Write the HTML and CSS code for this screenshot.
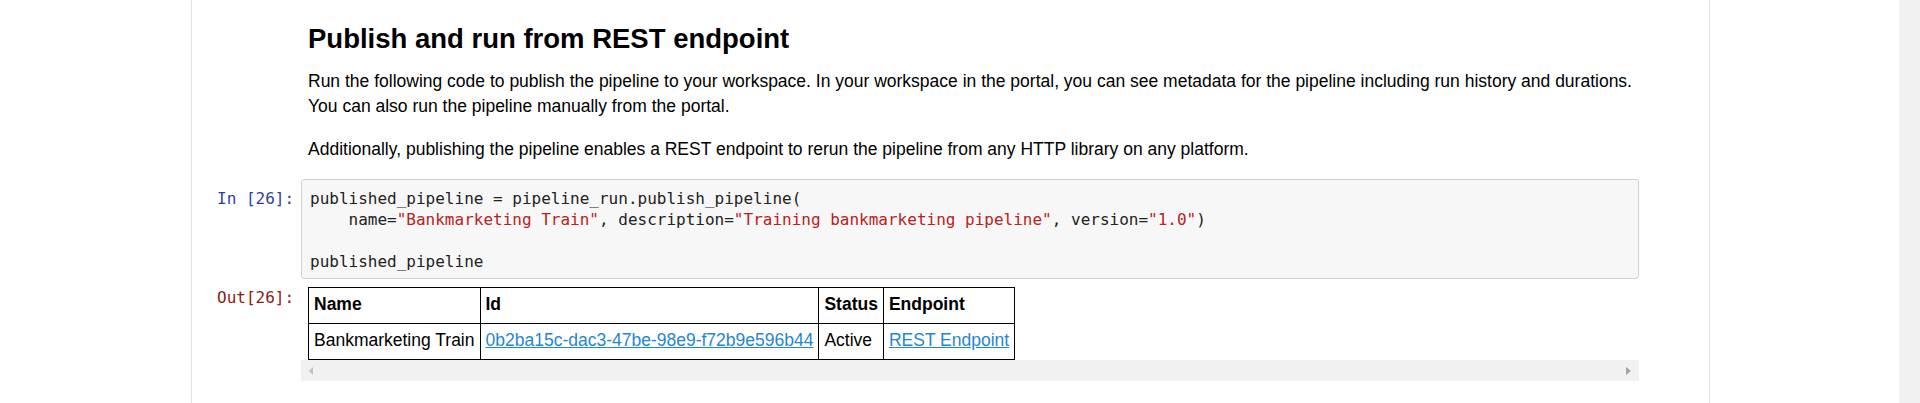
FILE: index.html
```html
<!DOCTYPE html>
<html lang="en">
<head>
<meta charset="utf-8">
<title>Publish and run from REST endpoint</title>
<link rel="stylesheet" href="styles.css">
</head>
<body>
<div class="page">
  <main class="viewport">
    <div class="notebook">
      <div class="cell text-cell">
        <div class="prompt"></div>
        <div class="md">
          <h2>Publish and run from REST endpoint</h2>
          <p>Run the following code to publish the pipeline to your workspace. In your workspace in the portal, you can see metadata for the pipeline including run history and durations.<br>You can also run the pipeline manually from the portal.</p>
          <p>Additionally, publishing the pipeline enables a REST endpoint to rerun the pipeline from any HTTP library on any platform.</p>
        </div>
      </div>
      <div class="cell code-cell">
        <div class="row">
          <div class="prompt in">In&nbsp;[26]:</div>
          <div class="input-area"><pre class="code">published_pipeline = pipeline_run.publish_pipeline(
    name=<span class="str">"Bankmarketing Train"</span>, description=<span class="str">"Training bankmarketing pipeline"</span>, version=<span class="str">"1.0"</span>)

published_pipeline</pre></div>
        </div>
        <div class="row">
          <div class="prompt out">Out[26]:</div>
          <div class="output-sub">
            <div class="table-wrap">
              <table class="result">
                <tr><th>Name</th><th>Id</th><th>Status</th><th>Endpoint</th></tr>
                <tr><td>Bankmarketing Train</td><td><a href="#">0b2ba15c-dac3-47be-98e9-f72b9e596b44</a></td><td>Active</td><td><a href="#">REST Endpoint</a></td></tr>
              </table>
            </div>
            <div class="hscroll"><span class="arrow left"></span><span class="arrow right"></span></div>
          </div>
        </div>
      </div>
    </div>
  </main>
  <div class="vscroll"></div>
</div>
</body>
</html>
```
FILE: styles.css
```css
* { box-sizing: border-box; }
html, body { margin: 0; padding: 0; background: #fff; }
body {
  font-family: "Liberation Sans", Arial, sans-serif;
  font-size: 17.5px;
  line-height: 25px;
  color: #000;
}
.page {
  display: flex;
  height: 403px;
  overflow: hidden;
}
.viewport {
  flex: 1;
  min-width: 0;
}
.vscroll {
  width: 21px;
  background: #f1f1f1;
}
.notebook {
  margin-left: 191px;
  width: 1519px;
  height: 403px;
  border-left: 1px solid #e2e2e2;
  border-right: 1px solid #e2e2e2;
  padding: 22px 70px 0 25px;
}
.cell { display: flex; flex-direction: column; }
.text-cell { flex-direction: row; }
.row { display: flex; }
.prompt {
  width: 84px;
  flex: none;
  font-family: "DejaVu Sans Mono", monospace;
  font-size: 16px;
  line-height: 21px;
  text-align: right;
  padding-right: 7px;
  white-space: nowrap;
}
.prompt.in { color: #303F9F; padding-top: 9px; }
.prompt.out { color: #8e1b12; padding-top: 8px; }
.md {
  flex: 1;
  padding-left: 7px;
}
.md h2 {
  margin: 0 0 14px;
  font-size: 27.5px;
  line-height: 33px;
  font-weight: bold;
}
.md p {
  margin: 0 0 18px;
  white-space: nowrap;
}
.md p:last-child { margin-bottom: 17px; }
.input-area {
  flex: 1;
  background: #f7f7f7;
  border: 1px solid #cfcfcf;
  border-radius: 3px;
  padding: 8px 8px 6px;
}
.code {
  margin: 0;
  font-family: "DejaVu Sans Mono", monospace;
  font-size: 16px;
  line-height: 21px;
  color: #222;
}
.str { color: #BA2121; }
.output-sub {
  flex: 1;
  min-width: 0;
  padding-top: 8px;
}
.table-wrap { padding-left: 7px; }
.result {
  border-collapse: collapse;
  font-size: 17.5px;
  line-height: 25px;
}
.result th, .result td {
  border: 1px solid #000;
  padding: 4px 5px 6px;
  text-align: left;
  white-space: nowrap;
}
.result th { font-weight: bold; }
.result a { color: #1f86d4; text-decoration: underline; }
.hscroll {
  height: 21px;
  background: #f1f1f1;
  display: flex;
  align-items: center;
  justify-content: space-between;
  padding: 0 8px;
}
.arrow {
  width: 0;
  height: 0;
  border-top: 4px solid transparent;
  border-bottom: 4px solid transparent;
}
.arrow.left { border-right: 4px solid #c2c2c2; }
.arrow.right { border-left: 5px solid #a3a3a3; }
```
